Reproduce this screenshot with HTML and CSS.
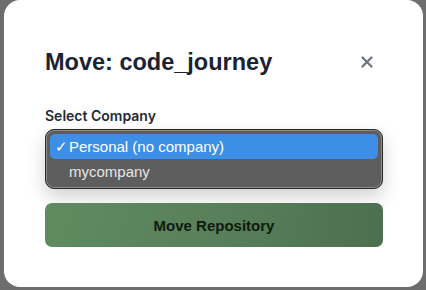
FILE: index.html
```html
<!DOCTYPE html>
<html>
<head>
<meta charset="utf-8">
<link rel="stylesheet" href="styles.css">
</head>
<body>
<div class="modal">
  <div class="header">
    <h2 class="title">Move: code_journey</h2>
    <button class="close" aria-label="Close">
      <svg width="12" height="12" viewBox="0 0 12 12"><path d="M1.5 1.5L10.5 10.5M10.5 1.5L1.5 10.5" stroke="#6b7280" stroke-width="2.2" stroke-linecap="round"/></svg>
    </button>
  </div>
  <label class="label">Select Company</label>
  <div class="menu">
    <div class="option selected"><span class="check">✓</span>Personal (no company)</div>
    <div class="option">mycompany</div>
  </div>
  <button class="submit">Move Repository</button>
</div>
</body>
</html>
```
FILE: styles.css
```css
html, body {
  margin: 0;
  padding: 0;
}
body {
  background: #6d6d6d;
  width: 426px;
  height: 290px;
  overflow: hidden;
  font-family: "Liberation Sans", Arial, sans-serif;
}
.modal {
  box-sizing: border-box;
  margin-left: 4px;
  width: 419px;
  height: 287px;
  background: #ffffff;
  border-radius: 16px;
  padding: 46px 40px 0 41px;
  display: flex;
  flex-direction: column;
}
.header {
  display: flex;
  justify-content: space-between;
  align-items: center;
  height: 32px;
}
.title {
  margin: 0;
  font-size: 23.5px;
  line-height: 32px;
  font-weight: 700;
  color: #1a2233;
}
.close {
  border: none;
  background: none;
  padding: 0;
  margin-right: 10px;
  width: 12px;
  height: 12px;
  display: flex;
}
.label {
  margin-top: 28px;
  font-family: Inter, "Liberation Sans", sans-serif;
  font-size: 14px;
  line-height: 20px;
  font-weight: 600;
  color: #1f2937;
}
.menu {
  margin-top: 3px;
  box-sizing: border-box;
  height: 60px;
  background: #5d5d5d;
  border: 1px solid #2a2a2a;
  box-shadow: inset 0 0 0 1px #8c8c8c, 0 8px 18px rgba(0,0,0,0.18);
  border-radius: 9px;
  padding: 4px 4px;
  display: flex;
  flex-direction: column;
}
.option {
  height: 25px;
  line-height: 25px;
  font-size: 15px;
  color: #e6e6e6;
  padding-left: 19px;
  border-radius: 5px;
  position: relative;
}
.option.selected {
  background: #3d8fe5;
  color: #ffffff;
}
.check {
  position: absolute;
  left: 5px;
  top: 0;
}
.submit {
  margin-top: 14px;
  height: 44px;
  border: none;
  border-radius: 7px;
  background: linear-gradient(100deg, #608b60 0%, #58805a 50%, #4d6f4f 100%);
  font-family: "Liberation Sans", Arial, sans-serif;
  font-size: 15px;
  font-weight: 700;
  color: #0f1a10;
}
```
